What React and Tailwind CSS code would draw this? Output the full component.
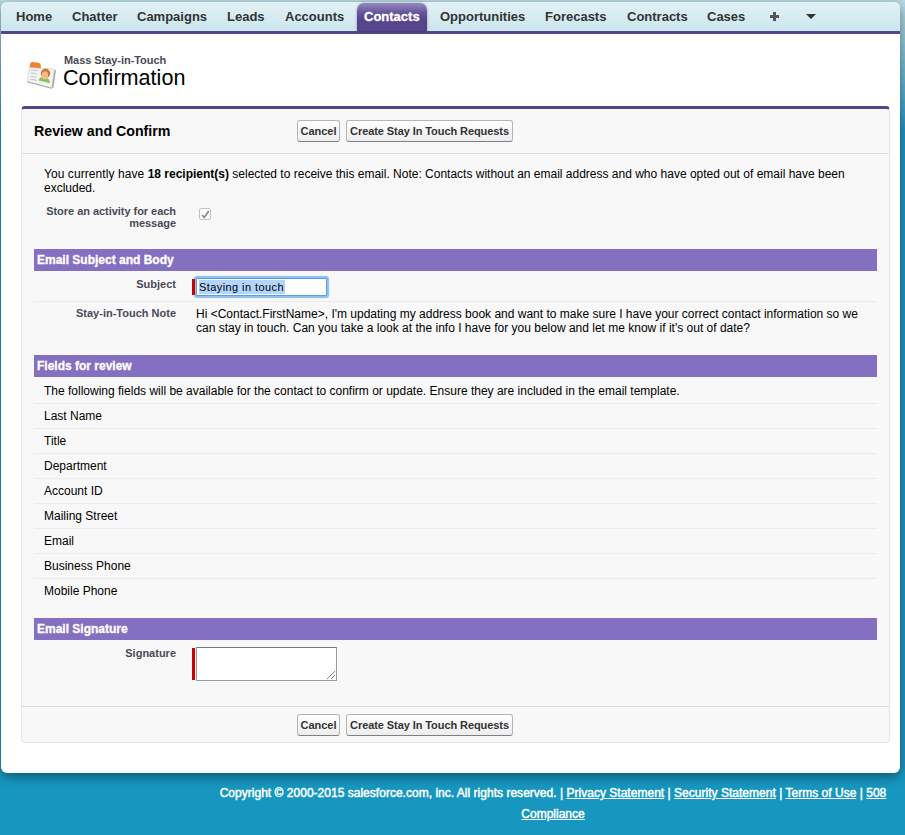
import React from "react";

const tabs = [
  { name: "Home", width: "w-[56px]" },
  { name: "Chatter", width: "w-[65px]" },
  { name: "Campaigns", width: "w-[90px]" },
  { name: "Leads", width: "w-[58px]" },
  { name: "Accounts", width: "w-[72px]" },
  { name: "Contacts", width: "w-[70px]", active: true },
  { name: "Opportunities", width: "w-[105px]" },
  { name: "Forecasts", width: "w-[82px]" },
  { name: "Contracts", width: "w-[80px]" },
  { name: "Cases", width: "w-[63px]" },
];

const fields = ["Last Name", "Title", "Department", "Account ID", "Mailing Street", "Email", "Business Phone", "Mobile Phone"];

function Nav() {
  return (
    <nav className="flex h-8 shrink-0 items-stretch rounded-t-[6px] border-b-3 border-[#56458c] bg-linear-to-b from-[#e2f1f5] to-[#cbe6ee] pl-[15px] text-[13px] font-bold text-[#333]">
      {tabs.map((t) =>
        t.active ? (
          <div key={t.name} className="mr-[13px] mt-[1px] w-[70px] shrink-0 rounded-t-[7px] bg-linear-to-b from-[#9689bd] via-[#65549a] via-35% to-[#56458c] to-60% pl-[7px] leading-[27px] text-white shadow-[0_0_3px_rgba(0,0,0,0.3)] [-webkit-text-stroke:0.300px_white]">
            {t.name}
          </div>
        ) : (
          <div key={t.name} className={`${t.width} shrink-0 leading-[29px]`}>{t.name}</div>
        )
      )}
      <svg className="mt-[10px] h-[9px] w-[9px]" viewBox="0 0 9 9" fill="#555">
        <path d="M3 0h3v3h3v3H6v3H3V6H0V3h3z" />
      </svg>
      <svg className="ml-[27px] mt-[12px] h-[5px] w-[10px]" viewBox="0 0 10 5" fill="#333">
        <path d="M0 0h10L5 5z" />
      </svg>
    </nav>
  );
}

function ContactIcon() {
  return (
    <svg className="h-8 w-8 shrink-0" viewBox="0 0 32 32">
      <path d="M27 10 L30 11.500 L27.500 28.500 L25.500 29.500z" fill="#a9a9a9" />
      <path d="M3.500 8.500 L28.500 10 L25.500 29 L1.300 22.500z" fill="#f4f4f4" stroke="#cdcdcd" strokeWidth=".7" />
      <path d="M1.300 22.800 L25.500 29.300" stroke="#a6a6a6" strokeWidth="1" />
      <path d="M4.200 4.500 Q4.500 3 6 3 L12.500 3.800 Q14.800 4.200 14.800 6.500 V9.300 L3.600 8.300z" fill="#f08235" />
      <path d="M5 11l7 .8M4.700 14l6.300 1M4.300 17l6.300 1.200M4 20l7 1.500" stroke="#c2c5ca" strokeWidth="1" />
      <path d="M12.800 21.500 Q13 18 17 18 Q24 18.500 24 24.300z" fill="#87c35b" />
      <circle cx="19.500" cy="14.500" r="4.700" fill="#c77332" />
      <ellipse cx="19" cy="16.300" rx="3.200" ry="4" fill="#f6bd82" />
    </svg>
  );
}

function Buttons() {
  const cls = "h-[22px] shrink-0 whitespace-nowrap rounded-[3px] border border-[#b5b5b5] border-b-[#7f7f7f] bg-linear-to-b from-white to-[#ededed] text-center text-[11px] font-bold leading-[20px] text-[#333]";
  return (
    <div className="flex gap-[6px]">
      <button className={`${cls} w-[43px]`}>Cancel</button>
      <button className={`${cls} w-[167px] tracking-[-0.080px]`}>Create Stay In Touch Requests</button>
    </div>
  );
}

function SectionBar({ children }) {
  return <h3 className="h-[22px] shrink-0 bg-[#8470c1] pl-[3px] text-[12px] font-bold leading-[22px] text-white [-webkit-text-stroke:0.300px_white]">{children}</h3>;
}

function Label({ children }) {
  return <div className="w-[142px] shrink-0 text-right text-[11px] font-bold leading-[12px] text-[#4a4a56]">{children}</div>;
}

export default function App() {
  return (
    <div className="flex h-[835px] w-[905px] flex-col overflow-hidden bg-linear-to-b from-[#b9d9e3] to-[#1797c0] to-[130px] pl-[1px] pt-[2px] font-['Liberation_Sans',Arial,sans-serif] text-[12px] leading-[14px] text-black">
      <main className="flex h-[771px] w-[899px] shrink-0 flex-col rounded-[6px] bg-white shadow-[0_4px_12px_rgba(0,0,0,0.4)]">
        <Nav />
        <header className="flex h-[72px] shrink-0 pl-[25px] pt-[25px]">
          <ContactIcon />
          <div className="-mt-[6px] pl-[6px]">
            <div className="whitespace-nowrap text-[11px] font-bold leading-[14px] tracking-[-0.050px] text-[#4a4a56]">Mass Stay-in-Touch</div>
            <h1 className="-ml-px text-[21.600px] leading-[21px]">Confirmation</h1>
          </div>
        </header>

        <section className="ml-[20px] flex h-[637px] w-[869px] flex-col rounded-[4px] border border-t-3 border-[#e6e6e6] border-t-[#56458c] bg-[#f8f8f8]">
          <div className="flex h-[45px] shrink-0 items-start border-b border-[#dbdbdb] pl-[12px] pt-[11px]">
            <h2 className="w-[263px] text-[14.200px] font-bold leading-[22px]">Review and Confirm</h2>
            <Buttons />
          </div>

          <div className="flex h-[552px] shrink-0 flex-col border-t border-white px-[12px]">
            <p className="mt-[12px] h-[37px] whitespace-nowrap pl-[10px]">
              <span className="tracking-[0.070px]">You currently have </span><b>18 recipient(s)</b> selected to receive this email. Note: Contacts without an email address and who have opted out of email have been
              <br />
              excluded.
            </p>
            <div className="flex h-[45px]">
              <div className="pt-px tracking-[-0.040px]"><Label>Store an activity for each message</Label></div>
              <div className="ml-[23px] mt-[4px] flex h-3 w-3 items-center justify-center rounded-[2px] border border-[#c4c4c4] bg-[#fafafa]">
                <svg className="h-[9px] w-[9px]" viewBox="0 0 9 9" fill="none" stroke="#8b8b8b" strokeWidth="1.700">
                  <path d="M1 5l2.300 2.500L7.700 1" />
                </svg>
              </div>
            </div>

            <SectionBar>Email Subject and Body</SectionBar>
            <div className="flex h-[31px] border-b border-[#ececec] pt-[7px]">
              <Label>Subject</Label>
              <div className="z-10 ml-[16px] mt-px h-4 w-[3px] bg-[#c00]" />
              <div className="ml-px flex h-[18px] w-[131px] items-center rounded-[1px] border border-[#5a9ee8] bg-white pl-[2px] text-[11px] shadow-[0_0_1px_2px_#8cbdf3]">
                <span className="h-[14px] w-[86px] whitespace-nowrap bg-[#b2d5fc] leading-[15px] tracking-[0.420px]">Staying in touch</span>
              </div>
            </div>
            <div className="flex h-[53px] pt-[5px]">
              <Label>Stay-in-Touch Note</Label>
              <p className="whitespace-nowrap pl-[20px]">
                Hi &lt;Contact.FirstName&gt;, I'm updating my address book and want to make sure I have your correct contact information so we
                <br />
                can stay in touch. Can you take a look at the info I have for you below and let me know if it's out of date?
              </p>
            </div>

            <SectionBar>Fields for review</SectionBar>
            <div className="h-[27px] border-b border-[#ececec] pl-[10px] pt-[7px]">
              The following fields will be available for the contact to confirm or update. Ensure they are included in the email template.
            </div>
            <ul>
              {fields.map((f) => (
                <li key={f} className="h-[25px] border-b border-[#ececec] pl-[10px] pt-[5px] last:border-b-0">{f}</li>
              ))}
            </ul>
            <div className="h-[14px]" />

            <SectionBar>Email Signature</SectionBar>
            <div className="flex pt-[7px]">
              <Label>Signature</Label>
              <div className="ml-[16px] mt-px h-8 w-[3px] bg-[#c00]" />
              <div className="ml-px flex h-[34px] w-[141px] items-end justify-end border border-[#999] border-t-[#777] bg-white">
                <svg className="mb-[1px] mr-[1px] h-[8px] w-[8px]" viewBox="0 0 8 8" stroke="#666" strokeWidth=".8">
                  <path d="M0 8L8 0M4 8l4-4" />
                </svg>
              </div>
            </div>
          </div>

          <div className="flex h-[36px] shrink-0 border-t border-[#dbdbdb] pl-[275px] pt-[7px]">
            <Buttons />
          </div>
        </section>
      </main>

      <footer className="w-[903px] pl-[201px] pt-[10px] text-center leading-[21px] text-white [-webkit-text-stroke:0.450px_white]">
        <div className="whitespace-nowrap tracking-[0.020px]">
          Copyright © 2000-2015 salesforce.com, inc. All rights reserved. | <u>Privacy Statement</u> | <u>Security Statement</u> | <u>Terms of Use</u> | <u>508</u>
        </div>
        <u>Compliance</u>
      </footer>
    </div>
  );
}
